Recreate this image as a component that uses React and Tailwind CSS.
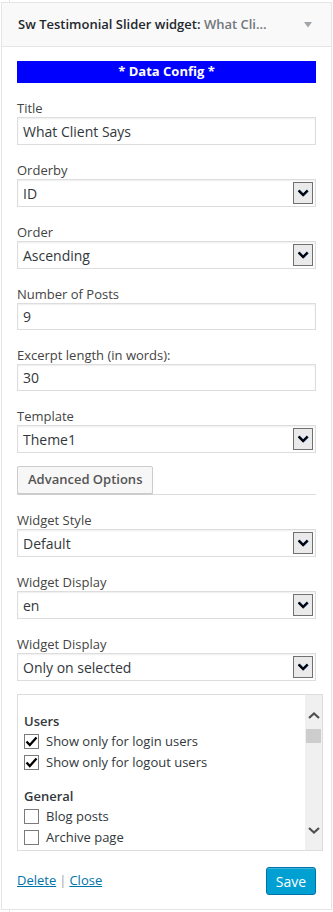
import React from "react";

const font = { fontFamily: '"Open Sans", "Noto Sans", sans-serif' };

function Chevron({ up = false, className = "" }) {
  return (
    <svg width="12" height="7" viewBox="0 0 12 7" className={className}>
      <path
        d={up ? "M1 6 L6 1.5 L11 6" : "M1 1 L6 5.5 L11 1"}
        fill="none"
        stroke="currentColor"
        strokeWidth="2.2"
      />
    </svg>
  );
}

function Label({ children }) {
  return <div className="h-[18px] text-[13px] leading-[18px] text-[#444]">{children}</div>;
}

function TextInput({ value, h = "h-[28px]" }) {
  return (
    <div
      className={`${h} w-full border border-[#ddd] shadow-[inset_0_1px_2px_rgba(0,0,0,0.07)] bg-white flex items-center px-[5px] text-[14px] text-[#32373c]`}
    >
      {value}
    </div>
  );
}

function Select({ value }) {
  return (
    <div className="h-[28px] w-full border border-[#ddd] shadow-[inset_0_1px_2px_rgba(0,0,0,0.07)] bg-white flex items-center justify-between pl-[5px] pr-[2px] text-[14px] text-[#32373c]">
      <span>{value}</span>
      <div className="w-[20px] h-[22px] border border-[#707070] bg-[#eaeaea] flex items-center justify-center text-[#0a0a1e]">
        <svg width="12" height="8" viewBox="0 0 12 8">
          <path d="M1.5 1.5 L6 6 L10.5 1.5" fill="none" stroke="#4a6fb5" strokeWidth="2.6" transform="translate(0.4,0)" />
          <path d="M1.5 1.5 L6 6 L10.5 1.5" fill="none" stroke="#000" strokeWidth="2" />
        </svg>
      </div>
    </div>
  );
}

function Field({ label, children, mt = "mt-[16px]" }) {
  return (
    <div className={mt}>
      <Label>{label}</Label>
      {children}
    </div>
  );
}

function Check({ checked, label }) {
  return (
    <div className="flex items-center h-[21px]">
      <div className="ml-[6px] w-[15px] h-[15px] border-[1.5px] border-[#7a7a7a] bg-white flex items-center justify-center">
        {checked && (
          <svg width="13" height="11" viewBox="0 0 13 11">
            <path d="M1.5 5.5 L4.8 9 L11.5 1.5" fill="none" stroke="#000" strokeWidth="2.3" />
          </svg>
        )}
      </div>
      <span className="ml-[7px] text-[13px] text-[#32373c]">{label}</span>
    </div>
  );
}

export default function App() {
  return (
    <div className="w-[333px] h-[912px] bg-white" style={font}>
      <div className="ml-[9px] h-[2px] border-l border-[#e5e5e5]" />
      <div className="ml-[1px] w-[331px] border border-[#e5e5e5] bg-white">
        <div className="h-[44px] bg-[#f9f9f9] border-b border-[#e5e5e5] flex items-center justify-between pl-[16px] pr-[19px]">
          <div className="text-[13px] font-semibold text-[#23282d] whitespace-nowrap pt-[1px]">
            Sw Testimonial Slider widget: <span className="text-[#72777c]">What Cli...</span>
          </div>
          <svg width="8" height="6" viewBox="0 0 8 6">
            <path d="M0 0 L8 0 L4 5.5 Z" fill="#a0a5aa" />
          </svg>
        </div>

        <div className="px-[15px] pt-[14px] pb-[14px]">
          <div className="h-[22px] bg-[#0000ff] text-white text-[13px] font-bold flex items-center justify-center">
            * Data Config *
          </div>

          <Field label="Title">
            <TextInput value="What Client Says" />
          </Field>
          <Field label="Orderby">
            <Select value="ID" />
          </Field>
          <Field label="Order">
            <Select value="Ascending" />
          </Field>
          <Field label="Number of Posts">
            <TextInput value="9" h="h-[27px]" />
          </Field>
          <Field label="Excerpt length (in words):">
            <TextInput value="30" h="h-[27px]" />
          </Field>
          <Field label="Template">
            <Select value="Theme1" />
          </Field>

          <div className="mt-[13px] border-b border-[#ddd] flex">
            <div className="h-[28px] px-[10px] border border-[#ccc] bg-[#f7f7f7] shadow-[0_1px_0_#ccc] rounded-[2px] flex items-center text-[13px] font-semibold text-[#555]">
              Advanced Options
            </div>
          </div>

          <Field label="Widget Style">
            <Select value="Default" />
          </Field>
          <Field label="Widget Display">
            <Select value="en" />
          </Field>
          <Field label="Widget Display">
            <Select value="Only on selected" />
          </Field>

          <div className="mt-[13px] w-[306px] h-[157px] border border-[#ddd] flex overflow-hidden">
            <div className="flex-1 pt-[17px] overflow-hidden">
              <div className="pl-[6px] h-[18px] leading-[18px] text-[13px] font-semibold text-[#32373c]">Users</div>
              <div className="mt-[1px]">
                <Check checked label="Show only for login users" />
                <Check checked label="Show only for logout users" />
              </div>
              <div className="mt-[14px] pl-[6px] h-[18px] leading-[18px] text-[13px] font-semibold text-[#32373c]">General</div>
              <div className="mt-[1px]">
                <Check label="Blog posts" />
                <Check label="Archive page" />
              </div>
            </div>
            <div className="w-[17px] bg-[#f0f0f0] flex flex-col items-center pt-[17px]">
              <Chevron up className="text-[#505050]" />
              <div className="mt-[10px] w-[15px] h-[14px] bg-[#cdcdcd]" />
              <div className="mt-[84px]">
                <Chevron className="text-[#505050]" />
              </div>
            </div>
          </div>

          <div className="mt-[16px] flex items-center justify-between">
            <div className="text-[13px] text-[#0073aa]">
              <span className="underline">Delete</span>
              <span className="text-[#a0a5aa] mx-[3px]">|</span>
              <span className="underline">Close</span>
            </div>
            <div className="h-[28px] w-[50px] border border-[#0073aa] bg-[#00a0d2] shadow-[inset_0_1px_0_rgba(120,200,230,0.5)] rounded-[3px] text-white text-[14px] flex items-center justify-center">
              Save
            </div>
          </div>
        </div>
      </div>
      <div className="ml-[9px] h-[3px] border-l border-[#e5e5e5]" />
    </div>
  );
}
